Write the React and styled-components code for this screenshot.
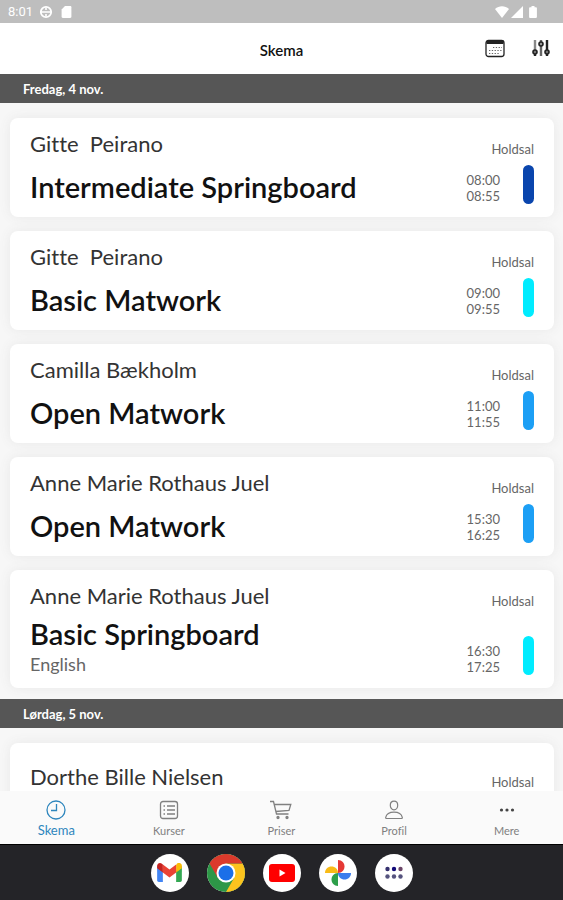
import React from "react";
import styled, { createGlobalStyle } from "styled-components";

const days = [
  {
    date: "Fredag, 4 nov.",
    classes: [
      { teacher: "Gitte  Peirano", title: "Intermediate Springboard", start: "08:00", end: "08:55", color: "#0a45ad" },
      { teacher: "Gitte  Peirano", title: "Basic Matwork", start: "09:00", end: "09:55", color: "#00ecff" },
      { teacher: "Camilla Bækholm", title: "Open Matwork", start: "11:00", end: "11:55", color: "#1c9ff5" },
      { teacher: "Anne Marie Rothaus Juel", title: "Open Matwork", start: "15:30", end: "16:25", color: "#1c9ff5" },
      {
        teacher: "Anne Marie Rothaus Juel",
        title: "Basic Springboard",
        note: "English",
        start: "16:30",
        end: "17:25",
        color: "#00ecff",
      },
    ],
  },
  {
    date: "Lørdag, 5 nov.",
    classes: [{ teacher: "Dorthe Bille Nielsen", tall: true }],
  },
];

const tabs = [
  { label: "Skema", icon: <ClockIcon />, active: true },
  { label: "Kurser", icon: <ListIcon /> },
  { label: "Priser", icon: <CartIcon /> },
  { label: "Profil", icon: <PersonIcon /> },
  { label: "Mere", icon: <MoreIcon /> },
];

const dockApps = [
  { label: "Gmail", icon: <GmailIcon /> },
  { label: "Chrome", icon: <ChromeIcon /> },
  { label: "YouTube", icon: <YouTubeIcon /> },
  { label: "Photos", icon: <PhotosIcon /> },
  { label: "All apps", icon: <AppsIcon /> },
];

export default function App() {
  return (
    <>
      <GlobalStyle />
      <Screen>
        <StatusBar>
          <StatusGroup>
            <span>8:01</span>
            <svg width="14" height="14" viewBox="0 0 14 14" fill="none" stroke="#fff">
              <circle cx="7" cy="7" r="5.2" strokeWidth="1.8" />
              <path d="M2 7h10M7 2.500v2.500M7 9v2.500" strokeWidth="1.6" />
            </svg>
            <svg width="14" height="14" viewBox="0 0 14 14" fill="#fff">
              <path d="M6 1h5.2c.7 0 1.2.5 1.2 1.2v9.6c0 .7-.5 1.2-1.2 1.2H3.8c-.7 0-1.2-.5-1.2-1.2V4.500z" />
            </svg>
          </StatusGroup>
          <StatusGroup $tight>
            <svg width="14" height="12" viewBox="0 0 14 12" fill="#fff">
              <path d="M0 3C4-.6 10-.6 14 3L7 12z" />
            </svg>
            <svg width="12" height="12" viewBox="0 0 12 12" fill="#fff">
              <path d="M0 12 12 0v12z" />
            </svg>
            <svg width="16" height="14" viewBox="0 0 16 14" fill="#fff">
              <path d="M6.500 1h3v1.200H11c.5 0 .9.400.9.900v9c0 .5-.4.900-.9.900H5c-.5 0-.9-.4-.9-.9v-9c0-.5.4-.9.9-.9h1.500z" />
            </svg>
          </StatusGroup>
        </StatusBar>

        <Header>
          <HeaderTitle>Skema</HeaderTitle>
          <Actions>
            <IconButton type="button" aria-label="Kalender">
              <CalendarIcon />
            </IconButton>
            <IconButton type="button" aria-label="Filter">
              <SlidersIcon />
            </IconButton>
          </Actions>
        </Header>

        <Schedule>
          {days.map((day) => (
            <section key={day.date}>
              <DayBar>{day.date}</DayBar>
              <ClassList>
                {day.classes.map((item) => (
                  <ClassCard key={item.teacher + item.start} item={item} />
                ))}
              </ClassList>
            </section>
          ))}
        </Schedule>

        <TabBar>
          {tabs.map((tab) => (
            <Tab key={tab.label} href="#" $active={tab.active}>
              {tab.icon}
              <span>{tab.label}</span>
            </Tab>
          ))}
        </TabBar>

        <Dock>
          {dockApps.map((app) => (
            <DockButton key={app.label} type="button" aria-label={app.label}>
              {app.icon}
            </DockButton>
          ))}
        </Dock>
      </Screen>
    </>
  );
}

function ClassCard({ item }) {
  return (
    <Card $tall={item.tall}>
      <Info>
        <Teacher>{item.teacher}</Teacher>
        {item.title && (
          <TitleBlock>
            <ClassTitle>{item.title}</ClassTitle>
            {item.note && <Note>{item.note}</Note>}
          </TitleBlock>
        )}
      </Info>
      <Side>
        <Room>Holdsal</Room>
        {item.start && (
          <TimeRow>
            <Times>
              <span>{item.start}</span>
              <span>{item.end}</span>
            </Times>
            <Level $color={item.color} />
          </TimeRow>
        )}
      </Side>
    </Card>
  );
}

function CalendarIcon() {
  return (
    <svg width="20" height="20" viewBox="0 0 20 20" fill="none" stroke="#222">
      <rect x="1" y="1.500" width="18" height="16" rx="2.500" strokeWidth="1.300" />
      <path d="M1.500 3.300h17" strokeWidth="3.400" />
      <path d="M8 8.500h9M4 11.500h13M4 14.500h10" strokeWidth="1.200" strokeDasharray="1.300 1.500" stroke="#666" />
    </svg>
  );
}

function SlidersIcon() {
  return (
    <svg width="20" height="20" viewBox="0 0 20 20" fill="none" stroke="#222">
      <path d="M4 1v10" stroke="#888" strokeWidth="2.400" />
      <path d="M10 1v2M10 7v10" stroke="#666" strokeWidth="2.400" />
      <path d="M16 1v10M16 15v2M4 15v2" strokeWidth="2.400" />
      <circle cx="4" cy="13" r="2" fill="#777" strokeWidth="1.600" />
      <circle cx="10" cy="5" r="2" fill="#999" strokeWidth="1.600" />
      <circle cx="16" cy="13" r="2" fill="#777" strokeWidth="1.600" />
    </svg>
  );
}

function ClockIcon() {
  return (
    <svg width="20" height="20" viewBox="0 0 20 20" fill="none" stroke="currentColor" strokeWidth="1.300">
      <circle cx="10" cy="10" r="9" />
      <path d="M10.500 4v6.500H5" />
    </svg>
  );
}

function ListIcon() {
  return (
    <svg width="20" height="20" viewBox="0 0 20 20" fill="none" stroke="currentColor" strokeWidth="1.300">
      <rect x="1.500" y="1.500" width="17" height="17" rx="2.500" />
      <path d="M8 6h8M8 10h8M8 14h8M4.500 6H6M4.500 10H6M4.500 14H6" />
    </svg>
  );
}

function CartIcon() {
  return (
    <svg width="22" height="20" viewBox="0 0 22 20" fill="none" stroke="currentColor" strokeWidth="1.300">
      <path d="M0 1.500h3.500L6.500 14h12M4.200 4.500h16.600L19 10.500 5.800 11.500" />
      <circle cx="8" cy="17.500" r="1" fill="currentColor" />
      <circle cx="17" cy="17.500" r="1" fill="currentColor" />
    </svg>
  );
}

function PersonIcon() {
  return (
    <svg width="20" height="20" viewBox="0 0 20 20" fill="none" stroke="currentColor" strokeWidth="1.200">
      <path d="M10 1.200c2.300 0 3.700 1.700 3.700 4s-1.400 4.600-3.700 4.600-3.700-2.300-3.700-4.600 1.400-4 3.700-4z" />
      <path d="M2.600 18.500c-.7 0-1.100-.5-.9-1.200C2.500 14 5.600 12.200 10 12.200s7.500 1.800 8.300 5.100c.2.700-.2 1.200-.9 1.200z" />
    </svg>
  );
}

function MoreIcon() {
  return (
    <svg width="20" height="20" viewBox="0 0 20 20" fill="#444">
      <circle cx="4.500" cy="10" r="1.600" />
      <circle cx="10" cy="10" r="1.600" />
      <circle cx="15.500" cy="10" r="1.600" />
    </svg>
  );
}

function GmailIcon() {
  return (
    <svg width="25" height="19" viewBox="0 0 26 20">
      <path d="M0 3v15.200C0 19.200.8 20 1.800 20H6V9z" fill="#4285f4" />
      <path d="M26 3v15.200c0 1-.8 1.800-1.800 1.800H20V9z" fill="#34a853" />
      <path d="M20 2v8l6-4.500V3c0-2.800-3-4-5-2.500z" fill="#fbbc04" />
      <path d="M6 10V1.500l7 5.300 7-5.300V10l-7 5.300z" fill="#ea4335" />
      <path d="M0 3v2.500L6 10V1.500L5 .7C3-.8 0 .3 0 3z" fill="#c5221f" />
    </svg>
  );
}

function ChromeIcon() {
  return (
    <svg width="38" height="38" viewBox="0 0 38 38">
      <circle cx="19" cy="19" r="19" fill="#2d9747" />
      <path d="M19 9.500h16.450A19 19 0 0 1 19 38l8.200-14.200z" fill="#fcc31e" />
      <path d="M19 9.500h16.450A19 19 0 0 0 2.550 9.500l8.200 14.200z" fill="#db3a2c" />
      <circle cx="19" cy="19" r="9.500" fill="#fff" />
      <circle cx="19" cy="19" r="7.500" fill="#1b6fe8" />
    </svg>
  );
}

function YouTubeIcon() {
  return (
    <svg width="26" height="18" viewBox="0 0 26 18">
      <rect width="26" height="18" rx="3" fill="#f00" />
      <path d="M10.500 5.500v7l6-3.500z" fill="#fff" />
    </svg>
  );
}

function PhotosIcon() {
  return (
    <svg width="28" height="28" viewBox="0 0 28 28">
      <path d="M14 14V1c4 0 6.500 3 6.500 6.500S18 14 14 14z" fill="#e53935" />
      <path d="M14 14h13c0 4-3 6.500-6.500 6.500S14 18 14 14z" fill="#3b7ded" />
      <path d="M14 14v13c-4 0-6.500-3-6.500-6.500S10 14 14 14z" fill="#2d9f4a" />
      <path d="M14 14H1c0-4 3-6.500 6.500-6.500S14 10 14 14z" fill="#f9bb16" />
    </svg>
  );
}

function AppsIcon() {
  return (
    <svg width="20" height="20" viewBox="0 0 20 20">
      <circle cx="3.500" cy="6" r="2.200" fill="#35306e" />
      <circle cx="10" cy="6" r="2.200" fill="#120a78" />
      <circle cx="16.500" cy="6" r="2.200" fill="#6c4668" />
      <circle cx="3.500" cy="13.500" r="2.200" fill="#55537e" />
      <circle cx="10" cy="13.500" r="2.200" fill="#55537e" />
      <circle cx="16.500" cy="13.500" r="2.200" fill="#55537e" />
    </svg>
  );
}

const GlobalStyle = createGlobalStyle`
  * {
    box-sizing: border-box;
  }

  body {
    margin: 0;
    font-family: "Lato", "Liberation Sans", sans-serif;
    font-variant-ligatures: none;
    background: #f7f7f7;
  }

  svg {
    display: block;
    flex: none;
  }
`;

const Screen = styled.div`
  display: flex;
  flex-direction: column;
  height: 100vh;
  overflow: hidden;
`;

const StatusBar = styled.div`
  display: flex;
  flex: none;
  align-items: center;
  justify-content: space-between;
  height: 23px;
  padding: 0 22px 0 8px;
  background: #bebebe;
  color: #fff;
  font-family: "Roboto", sans-serif;
  font-size: 13px;
`;

const StatusGroup = styled.div`
  display: flex;
  align-items: center;
  gap: ${({ $tight }) => ($tight ? "2px" : "6px")};
`;

const Header = styled.header`
  display: grid;
  flex: none;
  grid-template-columns: 1fr auto 1fr;
  align-items: center;
  height: 51px;
  padding: 0 12px;
  background: #fff;
`;

const HeaderTitle = styled.h1`
  grid-column: 2;
  margin: 0;
  padding-top: 2px;
  font-size: 15px;
  font-weight: 600;
  color: #111;
`;

const Actions = styled.div`
  display: flex;
  justify-content: flex-end;
  gap: 26px;
`;

const IconButton = styled.button`
  padding: 0;
  border: 0;
  background: none;
`;

const Schedule = styled.main`
  flex: 1;
  min-height: 0;
  overflow: hidden;
`;

const DayBar = styled.h2`
  display: flex;
  align-items: center;
  height: 29px;
  margin: 0;
  padding: 0 23px;
  background: #565656;
  color: #fff;
  font-size: 13px;
  font-weight: 700;
`;

const ClassList = styled.ul`
  display: flex;
  flex-direction: column;
  gap: 14px;
  margin: 0;
  padding: 15px 9px 11px 10px;
  list-style: none;
`;

const Card = styled.li`
  display: flex;
  justify-content: space-between;
  min-height: 99px;
  padding: ${({ $tall }) => ($tall ? "21px" : "13px")} 20px 0;
  border-radius: 8px;
  background: #fff;
  box-shadow: 0 0 12px #e8e8e8;
`;

const Info = styled.div`
  display: flex;
  flex-direction: column;
`;

const Teacher = styled.p`
  margin: 0;
  font-size: 22px;
  font-weight: 400;
  line-height: 26px;
  white-space: pre;
  color: #333;
`;

const TitleBlock = styled.div`
  display: flex;
  flex: 1;
  flex-direction: column;
  justify-content: center;
  padding: 9px 0;
`;

const ClassTitle = styled.h3`
  margin: 0;
  font-size: 29px;
  font-weight: 600;
  line-height: 32px;
  color: #111;
`;

const Note = styled.p`
  margin: 0;
  font-size: 18px;
  font-weight: 400;
  line-height: 29px;
  color: #666;
`;

const Side = styled.div`
  display: flex;
  flex-direction: column;
  justify-content: space-between;
  align-items: flex-end;
  padding: 10px 0 13px;
`;

const Room = styled.span`
  font-size: 13px;
  line-height: 16px;
  color: #666;
`;

const TimeRow = styled.div`
  display: flex;
  align-items: flex-end;
  gap: 23px;
`;

const Times = styled.div`
  display: flex;
  flex-direction: column;
  font-size: 13px;
  line-height: 16px;
  color: #666;
`;

const Level = styled.span`
  width: 11px;
  height: 39px;
  border-radius: 6px;
  background: ${({ $color }) => $color};
`;

const TabBar = styled.nav`
  display: flex;
  flex: none;
  height: 53px;
  background: #fafafa;
`;

const Tab = styled.a`
  display: flex;
  flex: 1;
  flex-direction: column;
  align-items: center;
  gap: ${({ $active }) => ($active ? "2px" : "3px")};
  padding-top: 9px;
  color: ${({ $active }) => ($active ? "#2e86bd" : "#808080")};
  font-size: ${({ $active }) => ($active ? "13px" : "11px")};
  line-height: 16px;
  text-decoration: none;
`;

const Dock = styled.footer`
  display: flex;
  flex: none;
  align-items: center;
  justify-content: center;
  gap: 18px;
  height: 56px;
  border-top: 1px solid #000;
  background: #242428;
`;

const DockButton = styled.button`
  display: flex;
  align-items: center;
  justify-content: center;
  width: 38px;
  height: 38px;
  padding: 0;
  border: 0;
  border-radius: 50%;
  background: #fff;
`;
